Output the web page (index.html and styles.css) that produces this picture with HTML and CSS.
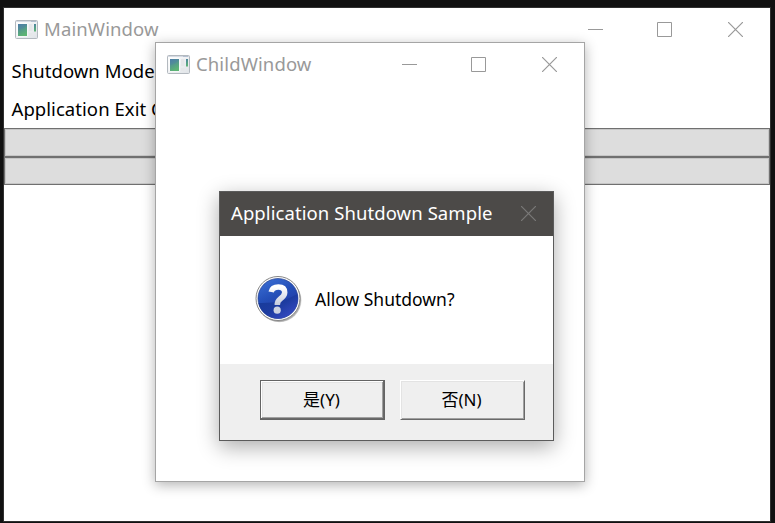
FILE: index.html
```html
<!DOCTYPE html>
<html lang="en">
<head>
<meta charset="utf-8">
<title>MainWindow</title>
<link rel="stylesheet" href="styles.css">
</head>
<body>
<svg width="0" height="0" class="defs">
  <defs>
    <linearGradient id="pane" x1="0" y1="0" x2=".4" y2="1"><stop offset="0" stop-color="#4a7da6"/><stop offset="1" stop-color="#5db474"/></linearGradient>
    <linearGradient id="frame" x1="0" y1="0" x2="1" y2="1"><stop offset="0" stop-color="#fff"/><stop offset="1" stop-color="#dfe3e7"/></linearGradient>
    <linearGradient id="ball" x1="0" y1="0" x2=".5" y2="1"><stop offset="0" stop-color="#3d72d8"/><stop offset=".5" stop-color="#244fb8"/><stop offset="1" stop-color="#2233a0"/></linearGradient>
    <linearGradient id="low" x1="0" y1="0" x2="1" y2="1"><stop offset="0" stop-color="#123690"/><stop offset=".5" stop-color="#1c3b9e"/><stop offset="1" stop-color="#4456d8"/></linearGradient>
    <linearGradient id="mark" x1="0" y1="0" x2="0" y2="1"><stop offset="0" stop-color="#fff"/><stop offset="1" stop-color="#c4cbdd"/></linearGradient>
    <symbol id="app" viewBox="0 0 23 19">
      <rect x=".5" y=".5" width="22" height="18" rx="1" fill="url(#frame)" stroke="#b3b9bf"/>
      <path d="M1 1.5h21" stroke="#d5dae3"/><path d="M16 1.5h5" stroke="#b4bfd0"/>
      <rect x="2.500" y="3.500" width="10" height="13" fill="#fff"/>
      <rect x="3" y="4" width="9" height="12" fill="url(#pane)"/>
      <path d="M3 10q6-1 9-5V4H3z" fill="#507faa" opacity=".35"/>
      <path d="M14 4h3.5v7H14zM14 13h3.5v3H14z" fill="#e5e7e9"/>
      <rect x="19" y="4" width="2" height="7.500" fill="url(#pane)"/>
    </symbol>
    <symbol id="min" viewBox="0 0 15 15"><path d="M0 7.5h15" stroke="#999"/></symbol>
    <symbol id="max" viewBox="0 0 15 15"><path d="M.5.5h14v14H.5z" fill="none" stroke="#999"/></symbol>
    <symbol id="close" viewBox="0 0 15 15"><path d="M0 0l15 15M15 0L0 15" stroke="currentColor" stroke-width="1.2"/></symbol>
  </defs>
</svg>
<main class="window main">
  <header class="titlebar">
    <svg class="app"><use href="#app"/></svg><span class="title">MainWindow</span>
    <div class="controls"><svg><use href="#min"/></svg><svg><use href="#max"/></svg><svg><use href="#close"/></svg></div>
  </header>
  <div class="label"><span>Shutdown Mode</span></div>
  <div class="label"><span>Application Exit C</span></div>
  <div class="bar"></div>
  <div class="bar second"></div>
</main>
<section class="window child">
  <header class="titlebar">
    <svg class="app"><use href="#app"/></svg><span class="title">ChildWindow</span>
    <div class="controls"><svg><use href="#min"/></svg><svg><use href="#max"/></svg><svg><use href="#close"/></svg></div>
  </header>
</section>
<section class="dialog">
  <header class="dialog-title"><span>Application Shutdown Sample</span><svg class="x"><use href="#close"/></svg></header>
  <div class="message">
    <svg class="question" viewBox="0 0 48 49">
      <circle cx="24.5" cy="25.2" r="22" fill="#000" opacity=".15"/>
      <circle cx="23.9" cy="25" r="22" fill="#000" opacity=".2"/>
      <circle cx="23" cy="23.5" r="22" fill="#fff" stroke="#858585"/>
      <circle cx="23" cy="23.5" r="20" fill="url(#ball)" stroke="#26408e" stroke-width=".7"/>
      <path d="M3.4 28Q25 29 42.5 19A20 20 0 0 1 3.4 28z" fill="url(#low)" opacity=".85"/>
      <path d="M16.200 17q1-5 7.200-5 6.300 0 6.300 5.500 0 3.200-4.500 6.500-2.900 2.200-2.900 6" fill="none" stroke="url(#mark)" stroke-width="5.500"/>
      <circle cx="22.200" cy="35.200" r="3.600" fill="#ccd2e1"/>
    </svg>
    <span class="prompt">Allow Shutdown?</span>
  </div>
  <footer class="actions">
    <button class="button default"><span>是(Y)</span></button>
    <button class="button"><span>否(N)</span></button>
  </footer>
</section>
</body>
</html>
```
FILE: styles.css
```css
* { box-sizing: border-box; }
body {
  margin: 0;
  width: 775px;
  height: 523px;
  padding: 7px 4px 1px 3px;
  overflow: hidden;
  background: #111;
  font-family: "Noto Sans", "Noto Sans CJK SC", sans-serif;
  font-size: 18.5px;
  color: #000;
}
.defs { position: absolute; }
svg { display: block; flex: none; }
span { white-space: nowrap; }
.window { background: #fff; }
.main { width: 768px; height: 515px; border: 1px solid #303030; }
.titlebar { display: flex; align-items: center; height: 43px; padding: 0 27px 0 11px; }
.app { width: 23px; height: 19px; }
.title { margin-left: 6px; padding-bottom: 2px; color: #999; letter-spacing: .12px; }
.controls { display: flex; gap: 54px; margin-left: auto; color: #999; }
.controls svg { width: 15px; height: 15px; }
.controls svg:last-child { margin-left: 2px; }
.label { display: flex; align-items: center; height: 38px; padding: 0 0 1px 7.5px; letter-spacing: .06px; }
.main .titlebar + .label { height: 39px; }
.bar { height: 29px; border: 1px solid #707070; background: #ddd; box-shadow: inset 0 0 0 1px #c6c6c6; }
.bar.second { height: 28px; }
.child {
  position: absolute;
  left: 155px;
  top: 42px;
  width: 430px;
  height: 440px;
  border: 1px solid #a5a5a5;
  box-shadow: 0 3px 12px rgba(0, 0, 0, .3);
}
.dialog {
  position: absolute;
  left: 219px;
  top: 191px;
  width: 335px;
  height: 250px;
  border: 1px solid #5b5b5b;
  background: #fff;
  box-shadow: 0 6px 20px rgba(0, 0, 0, .33);
}
.dialog-title { display: flex; align-items: center; justify-content: space-between; height: 44px; padding: 0 17px 2px 11px; background: #4c4a48; color: #fff; letter-spacing: .08px; }
.dialog-title span { padding-bottom: 2px; }
.x { width: 15px; height: 15px; color: #7a7978; }
.message { display: flex; align-items: center; height: 128px; padding: 0 0 2px 35px; }
.question { width: 48px; height: 49px; }
.prompt { margin-left: 12px; font-size: 17.5px; }
.actions { display: flex; gap: 15px; height: 76px; padding: 16px 0 0 40px; background: #efefef; }
.button {
  width: 125px;
  height: 40px;
  padding: 0 2px 3px 0;
  border: 1px solid;
  border-color: #fff #696969 #696969 #fff;
  background: #efefef;
  box-shadow: inset 1px 1px #e3e3e3, inset -1px -1px #a0a0a0;
  color: #000;
  font: inherit;
  font-size: 17px;
}
.button.default {
  border-color: #646464;
  box-shadow: inset -1px -1px #696969, inset 1px 1px #fff, inset -2px -2px #a0a0a0, inset 2px 2px #e3e3e3;
}
```
